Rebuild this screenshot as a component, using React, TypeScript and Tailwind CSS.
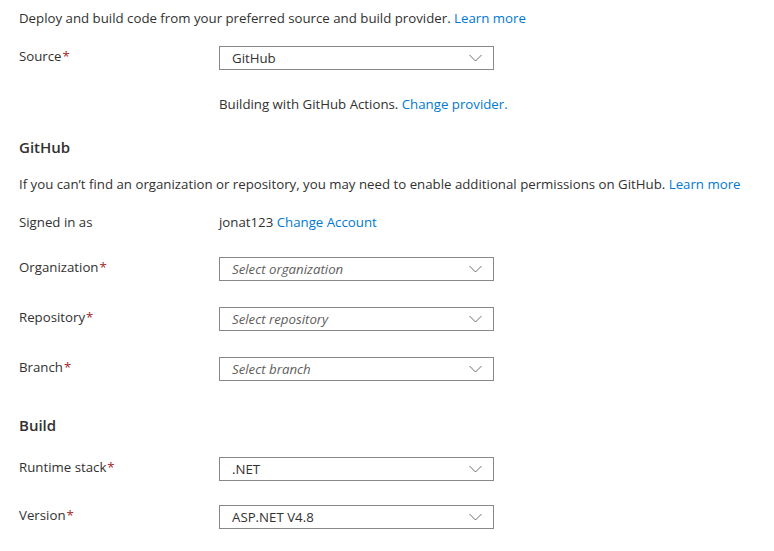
import React from "react";

const Chevron = () => (
  <svg width="13" height="8" viewBox="0 0 13 8" className="shrink-0">
    <path d="M0.5 1 L6.5 7 L12.5 1" fill="none" stroke="#605e5c" strokeWidth="0.9" />
  </svg>
);

const Req = () => <span className="ml-[1px] text-[#a4262c]">*</span>;

function Dropdown({ value, placeholder }: { value?: string; placeholder?: string }) {
  return (
    <div className="flex h-[24px] w-[275px] items-center justify-between border border-[#8a8886] bg-white pl-[12px] pr-[11px]">
      {value ? (
        <span className="pt-[1px] text-[#323130]">{value}</span>
      ) : (
        <span className="pt-[1px] italic text-[#605e5c]">{placeholder}</span>
      )}
      <Chevron />
    </div>
  );
}

function Row({ label, required, children, className = "" }: { label: string; required?: boolean; children: React.ReactNode; className?: string }) {
  return (
    <div className={`flex items-start ${className}`}>
      <div className="w-[200px] leading-[20px]">
        {label}
        {required && <Req />}
      </div>
      {children}
    </div>
  );
}

export default function App() {
  return (
    <div
      className="min-h-[551px] w-[774px] bg-white pl-[19px] pt-[8px] text-[13.25px] text-[#323130]"
      style={{ fontFamily: '"Segoe UI", "Open Sans", "Noto Sans", sans-serif' }}
    >
      <div className="leading-[20px]">
        Deploy and build code from your preferred source and build provider.{" "}
        <span className="text-[#0078d4]">Learn more</span>
      </div>
      <Row label="Source" required className="mt-[18px]">
        <Dropdown value="GitHub" />
      </Row>
      <div className="ml-[200px] mt-[24px] leading-[20px]">
        Building with GitHub Actions. <span className="text-[#0078d4]">Change provider.</span>
      </div>
      <div className="mt-[23px] text-[15px] font-semibold leading-[20px]">GitHub</div>
      <div className="mt-[17px] leading-[20px]">
        If you can’t find an organization or repository, you may need to enable additional permissions on GitHub.{" "}
        <span className="text-[#0078d4]">Learn more</span>
      </div>
      <Row label="Signed in as" className="mt-[18px]">
        <div className="leading-[20px]">
          jonat123 <span className="text-[#0078d4]">Change Account</span>
        </div>
      </Row>
      <Row label="Organization" required className="mt-[25px]">
        <Dropdown placeholder="Select organization" />
      </Row>
      <Row label="Repository" required className="mt-[26px]">
        <Dropdown placeholder="Select repository" />
      </Row>
      <Row label="Branch" required className="mt-[26px]">
        <Dropdown placeholder="Select branch" />
      </Row>
      <div className="mt-[34px] text-[15px] font-semibold leading-[20px]">Build</div>
      <Row label="Runtime stack" required className="mt-[22px]">
        <Dropdown value=".NET" />
      </Row>
      <Row label="Version" required className="mt-[24px]">
        <Dropdown value="ASP.NET V4.8" />
      </Row>
    </div>
  );
}
